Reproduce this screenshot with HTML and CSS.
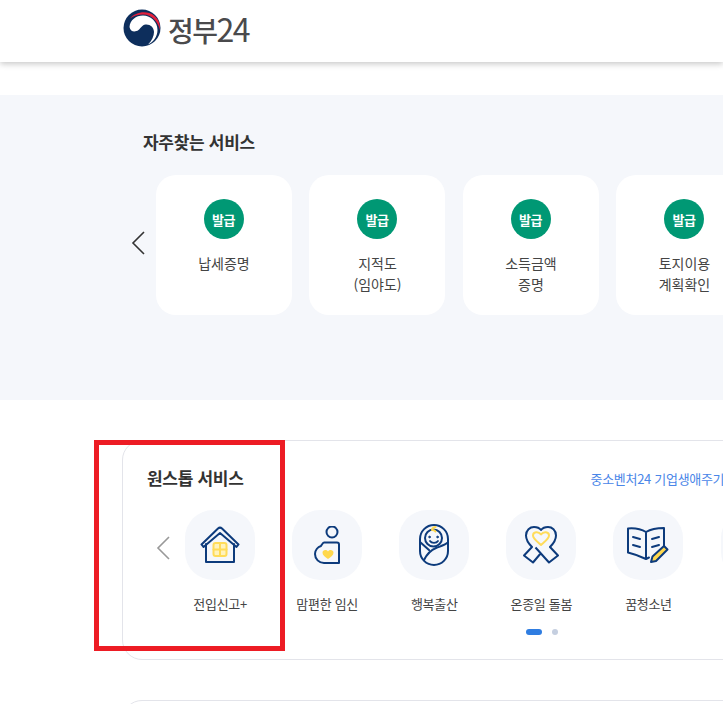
FILE: index.html
```html
<!DOCTYPE html>
<html lang="ko">
<head>
    <meta charset="UTF-8">
    <meta name="viewport" content="width=device-width, initial-scale=1.0">
    <title>정부24</title>
    <link rel="stylesheet" href="styles.css">
</head>
<body>
    <header class="header">
        <svg class="logo-mark" width="38" height="38" viewBox="0 0 38 38">
            <circle cx="19" cy="19" r="18.500" fill="#0d2e5c"/>
            <path d="M7 9.500C12 3 24 1 31 6.500 35.500 10 37.500 15 37 21 35 13 29 5.500 20 5.500 15 5.500 10.500 7 7 9.500z" fill="#e2203c"/>
            <path d="M6.500 18C7 11 13 6.500 20 6.500 28 6.500 34.500 13 34.500 21 34.500 28 30 33 25 35.500 29 31.500 31 27 31 23 31 18 27 15 22.500 15.500 19 16 18 19 15.500 21 12 23.500 7.500 23 6.500 18z" fill="#fff"/>
        </svg>
        <span class="logo-text">정부<span class="logo-num">24</span></span>
    </header>

    <section class="favorites">
        <h2 class="favorites-title">자주찾는 서비스</h2>
        <div class="favorites-row">
            <svg class="arrow" width="14" height="24" viewBox="0 0 14 24"><path d="M13 1 2 12l11 11" fill="none" stroke="#333" stroke-width="1.600"/></svg>
            <div class="card">
                <span class="badge">발급</span>
                <p class="card-name">납세증명</p>
            </div>
            <div class="card">
                <span class="badge">발급</span>
                <p class="card-name">지적도<br>(임야도)</p>
            </div>
            <div class="card">
                <span class="badge">발급</span>
                <p class="card-name">소득금액<br>증명</p>
            </div>
            <div class="card">
                <span class="badge">발급</span>
                <p class="card-name">토지이용<br>계획확인</p>
            </div>
        </div>
    </section>

    <section class="onestop">
        <div class="panel">
            <div class="panel-head">
                <h2 class="panel-title">원스톱 서비스</h2>
                <a class="panel-link">중소벤처24 기업생애주기</a>
            </div>
            <div class="panel-row">
                <svg class="arrow arrow-gray" width="14" height="24" viewBox="0 0 14 24"><path d="M13 1 2 12l11 11" fill="none" stroke="#999" stroke-width="1.600"/></svg>
                <div class="tile-item">
                    <div class="tile">
                        <svg width="40" height="38" viewBox="0 0 40 38" fill="none" stroke="#0d3b7c" stroke-width="2" stroke-linejoin="round" stroke-linecap="round">
                            <path d="M1.500 18.500 18 2.500a3 3 0 0 1 4 0L38.500 18.500l-2 2.500L20 7 3.500 21z"/>
                            <path d="M6 18v18h28V18"/>
                            <rect x="13.500" y="17" width="13" height="13" rx="2" fill="#fff3bd" stroke="#ffdc5a"/>
                            <path d="M20 17v13M13.500 23.500h13" stroke="#ffdc5a"/>
                        </svg>
                    </div>
                    <span class="tile-name">전입신고+</span>
                </div>
                <div class="tile-item">
                    <div class="tile">
                        <svg width="26" height="38" viewBox="0 0 26 38" fill="none" stroke="#0d3b7c" stroke-width="2" stroke-linejoin="round">
                            <circle cx="18" cy="6" r="5.500"/>
                            <path d="M10 16.500h13a2 2 0 0 1 2 2V37H10C5 37 1 33 1 28c0-4 3-7 6-8 1-1.500 2-3.500 3-3.500z"/>
                            <path d="M14 33c-3-2.200-5.500-4-5.500-6.300 0-3 3.800-3.800 5.500-1.300 1.700-2.500 5.500-1.700 5.500 1.300 0 2.300-2.500 4.100-5.500 6.300z" fill="#ffd84d" stroke="none"/>
                        </svg>
                    </div>
                    <span class="tile-name">맘편한 임신</span>
                </div>
                <div class="tile-item">
                    <div class="tile">
                        <svg width="30" height="42" viewBox="0 0 30 42" fill="none" stroke="#0d3b7c" stroke-width="2" stroke-linecap="round">
                            <rect x="1" y="1" width="28" height="40" rx="14"/>
                            <circle cx="14.500" cy="14" r="8.500"/>
                            <path d="M13 6c0-2 2-3 3.500-3M13 6c1.500 0 3 .5 3.500 1.500" stroke="#ffd84d"/>
                            <path d="M11 17c1.500 2.500 6.500 2.500 8 0" stroke-width="1.800"/>
                            <circle cx="10.500" cy="13" r=".8" fill="#0d3b7c" stroke-width="1"/>
                            <circle cx="18.500" cy="13" r=".8" fill="#0d3b7c" stroke-width="1"/>
                            <path d="M5 36C8 30 12 26 17 24 22 22 26 21 28 19M1 18l9 8"/>
                        </svg>
                    </div>
                    <span class="tile-name">행복출산</span>
                </div>
                <div class="tile-item">
                    <div class="tile">
                        <svg width="36" height="38" viewBox="0 0 36 38" fill="none" stroke="#0d3b7c" stroke-width="2" stroke-linejoin="round">
                            <path d="M18 27 10 36.500 1 29.500 9 21C4 16 3 13 3 9.500 3 4 7 1 11 1 14 1 16.500 2 18 4 19.500 2 22 1 25 1 29 1 33 4 33 9.500 33 13 32 16 27 21L35 29.500 26 36.500 12.500 21.500"/>
                            <path d="M18 19C13.500 15 10 12.500 10 9.500 10 5.500 15.500 5 18 8.500 20.500 5 26 5.500 26 9.500 26 12.500 22.500 15 18 19z" stroke="#ffdc5a"/>
                        </svg>
                    </div>
                    <span class="tile-name">온종일 돌봄</span>
                </div>
                <div class="tile-item">
                    <div class="tile">
                        <svg width="42" height="38" viewBox="0 0 42 38" fill="none" stroke="#0d3b7c" stroke-width="2" stroke-linecap="round" stroke-linejoin="round">
                            <path d="M19 6C14 3 7 2 1 2.500V26.500C7 28 13 30 19 33l3-1.500M19 6c5-3 12-4 18-4V21M19 6v27"/>
                            <path d="M6 11l7 2M6 19l7 2M25 13l7-2M25 21l7-2"/>
                            <path d="M24 36l1.500-5.500L37 20l3.500 3.500L29 35z" fill="#ffd84d"/>
                        </svg>
                    </div>
                    <span class="tile-name">꿈청소년</span>
                </div>
                <div class="tile-item">
                    <div class="tile"></div>
                </div>
            </div>
            <div class="dots">
                <span class="dot dot-on"></span>
                <span class="dot"></span>
            </div>
        </div>
        <div class="panel panel-next"></div>
        <div class="highlight"></div>
    </section>
</body>
</html>
```

FILE: styles.css
```css
html, body {
    margin: 0;
    height: 704px;
    overflow: hidden;
    background-color: #fff;
}
body {
    font-family: "Noto Sans CJK KR", "Noto Sans", sans-serif;
    color: #333;
}
h2, p {
    margin: 0;
}

.header {
    display: flex;
    align-items: center;
    gap: 7px;
    height: 62px;
    padding: 0 0 6px 123px;
    box-sizing: border-box;
    background-color: #fff;
    box-shadow: 0 2px 6px rgba(0, 0, 0, 0.22);
}
.logo-text {
    font-size: 28px;
    font-weight: 500;
    line-height: 1;
    letter-spacing: -1.5px;
    color: #4a4a4c;
}
.logo-num {
    font-size: 32px;
    font-weight: 400;
}

.favorites {
    margin-top: 33px;
    height: 305px;
    padding: 34px 0 0 143px;
    box-sizing: border-box;
    overflow: hidden;
    background-color: #f5f7fb;
}
.favorites-title {
    font-size: 17px;
    font-weight: 700;
    line-height: 25px;
    letter-spacing: -0.3px;
    color: #333;
}
.favorites-row {
    display: flex;
    align-items: center;
    gap: 17.500px;
    margin: 21px 0 0 -12px;
    width: 800px;
}
.arrow {
    flex: none;
}
.favorites-row .arrow {
    margin: 0 -7px 4px 0;
}
.card {
    flex: none;
    width: 136px;
    height: 140px;
    padding-top: 24px;
    box-sizing: border-box;
    text-align: center;
    background-color: #fff;
    border-radius: 20px;
}
.badge {
    display: flex;
    align-items: center;
    justify-content: center;
    width: 40px;
    height: 40px;
    margin: 0 auto;
    border-radius: 50%;
    background-color: #009874;
    color: #fff;
    font-size: 13px;
    font-weight: 700;
    letter-spacing: -0.5px;
}
.card-name {
    margin-top: 14px;
    padding-left: 1px;
    font-size: 14px;
    line-height: 21px;
    color: #444;
}

.onestop {
    position: relative;
    height: 304px;
    padding: 40px 0 0 122px;
    box-sizing: border-box;
    overflow: hidden;
}
.panel {
    width: 700px;
    height: 220px;
    padding: 24px 0 0 24px;
    box-sizing: border-box;
    border: 1px solid #e3e4ea;
    border-radius: 20px;
}
.panel-next {
    margin-top: 40px;
}
.panel-head {
    display: flex;
    align-items: center;
    gap: 347px;
    height: 26px;
    white-space: nowrap;
}
.panel-title {
    font-size: 17px;
    font-weight: 700;
    line-height: 26px;
    letter-spacing: -0.3px;
    color: #333;
}
.panel-link {
    font-size: 13px;
    letter-spacing: -0.3px;
    color: #4a86e8;
}
.panel-row {
    display: flex;
    gap: 37.100px;
    margin: 19px 0 0 10px;
}
.panel-row .arrow {
    margin: 26px -22px 0 -1px;
}
.tile-item {
    flex: none;
    width: 70px;
    display: flex;
    flex-direction: column;
    align-items: center;
}
.tile {
    display: flex;
    align-items: center;
    justify-content: center;
    width: 70px;
    height: 70px;
    border-radius: 28px;
    background-color: #f5f7fb;
}
.tile-name {
    margin-top: 14px;
    font-size: 13px;
    line-height: 20px;
    letter-spacing: -0.3px;
    white-space: nowrap;
    color: #444;
}
.dots {
    display: flex;
    align-items: center;
    gap: 10px;
    margin: 15px 0 0 379px;
}
.dot {
    width: 6px;
    height: 6px;
    border-radius: 3px;
    background-color: #c5cfe0;
}
.dot-on {
    width: 16px;
    background-color: #2f7de1;
}

/* red box marked on the capture */
.highlight {
    position: absolute;
    left: 94px;
    top: 40px;
    width: 191px;
    height: 211px;
    box-sizing: border-box;
    border: 5px solid #ed1c24;
}
```
